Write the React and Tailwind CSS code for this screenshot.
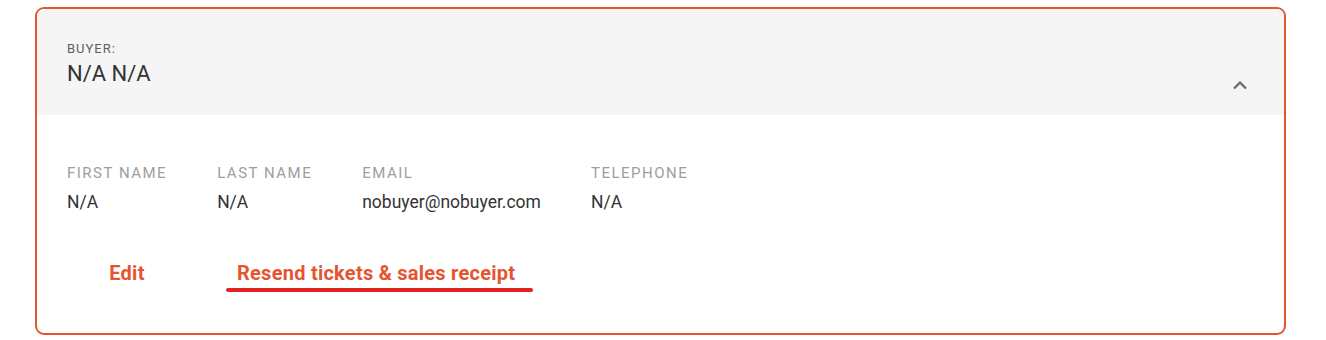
import React from "react";

const fields = [
  { label: "First name", value: "N/A" },
  { label: "Last name", value: "N/A" },
  { label: "Email", value: "nobuyer@nobuyer.com" },
  { label: "Telephone", value: "N/A" },
];

function ChevronUp() {
  return (
    <svg width="16" height="10" viewBox="0 0 16 10" fill="none">
      <path d="M2 8.5L8 2.5L14 8.5" stroke="#666666" strokeWidth="2.2" />
    </svg>
  );
}

export default function App() {
  return (
    <div className="bg-white h-[340px] pt-[7px] pl-[35px] pr-[40px] font-['Roboto',sans-serif]">
      <div className="border-2 border-[#e5552f] rounded-[9px] overflow-hidden h-[328px]">
        <div className="bg-[#f5f5f5] h-[106px] px-[30px] pt-[33px] flex justify-between">
          <div>
            <div className="text-[13px] tracking-[1px] text-[#5f5f5f] uppercase leading-none">
              Buyer:
            </div>
            <div className="text-[22px] text-[#333] leading-none mt-[8px]">
              N/A N/A
            </div>
          </div>
          <div className="pt-[38px] pr-[6px]">
            <ChevronUp />
          </div>
        </div>
        <div className="px-[30px] pt-[51px]">
          <div className="flex gap-[50px]">
            {fields.map((f) => (
              <div key={f.label}>
                <div className="text-[15px] uppercase tracking-[1.5px] text-[#9e9e9e] leading-none">
                  {f.label}
                </div>
                <div className="text-[17.5px] text-[#333] leading-none mt-[13px]">
                  {f.value}
                </div>
              </div>
            ))}
          </div>
          <div className="flex items-center mt-[51px]">
            <button className="w-[120px] text-[20px] font-bold tracking-[0.25px] text-[#e5552f] leading-none">
              Edit
            </button>
            <button className="relative ml-[39px] pl-[11px] pr-[18px] text-[20px] font-bold tracking-[0.25px] text-[#e5552f] leading-none">
              Resend tickets &amp; sales receipt
              <span className="absolute left-0 right-0 -bottom-[9px] h-[4px] rounded-full bg-[#e62121]"></span>
            </button>
          </div>
        </div>
      </div>
    </div>
  );
}
